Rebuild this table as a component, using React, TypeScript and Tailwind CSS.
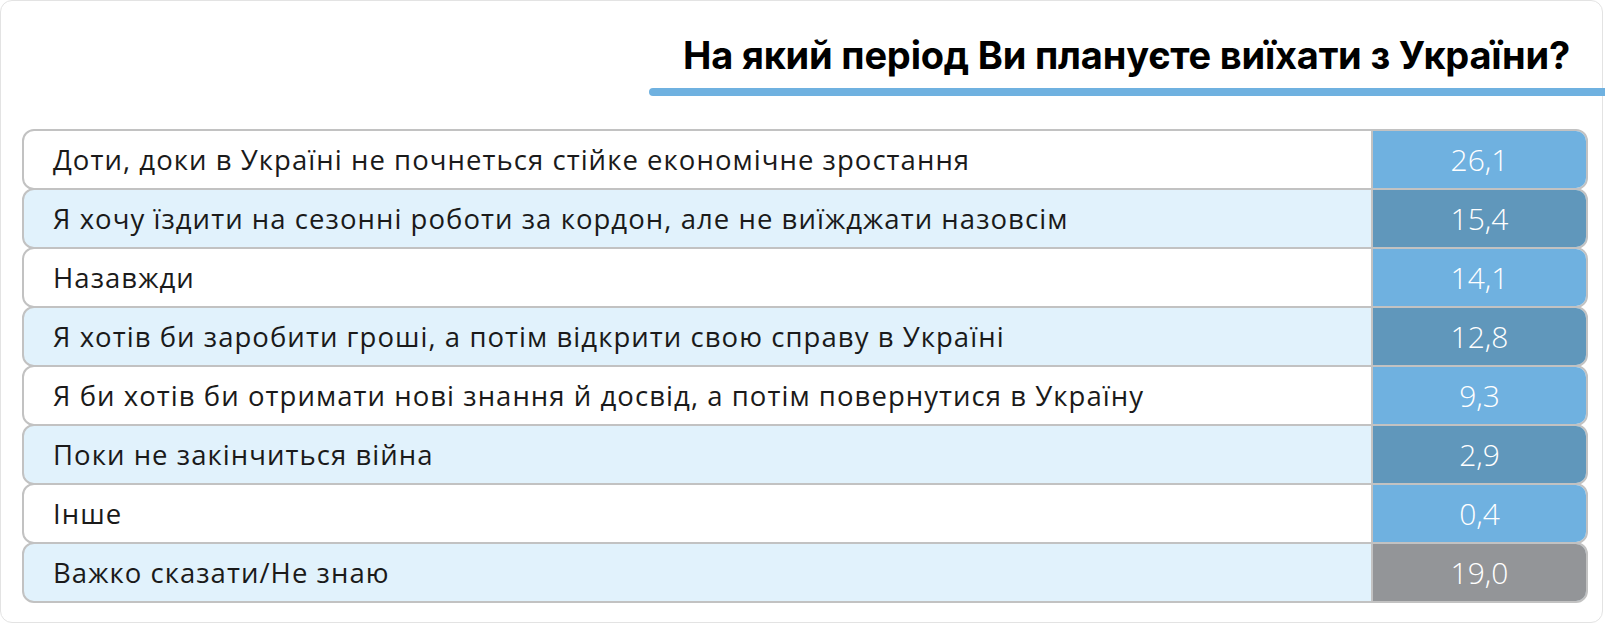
const rows = [
  { label: "Доти, доки в Україні не почнеться стійке економічне зростання", value: "26,1", shade: false, tone: "light" },
  { label: "Я хочу їздити на сезонні роботи за кордон, але не виїжджати назовсім", value: "15,4", shade: true, tone: "dark" },
  { label: "Назавжди", value: "14,1", shade: false, tone: "light" },
  { label: "Я хотів би заробити гроші, а потім відкрити свою справу в Україні", value: "12,8", shade: true, tone: "dark" },
  { label: "Я би хотів би отримати нові знання й досвід, а потім повернутися в Україну", value: "9,3", shade: false, tone: "light" },
  { label: "Поки не закінчиться війна", value: "2,9", shade: true, tone: "dark" },
  { label: "Інше", value: "0,4", shade: false, tone: "light" },
  { label: "Важко сказати/Не знаю", value: "19,0", shade: true, tone: "gray" },
];

const toneClass: Record<string, string> = {
  light: "bg-[#6fb1e0]",
  dark: "bg-[#6097bb]",
  gray: "bg-[#939598]",
};

export default function App() {
  return (
    <div className="w-[1606px] h-[626px] bg-white font-['Open_Sans',sans-serif]">
      <div className="h-[623px] w-[1603px] rounded-xl border border-[#e3e3e3] flex flex-col">
        {/* title */}
        <div className="flex flex-col items-end pt-[30px]">
          <h1 className="pr-[32px] text-[38px] leading-[48px] font-bold text-black tracking-[-0.2px] font-['Inter',sans-serif]">
            На який період Ви плануєте виїхати з України?
          </h1>
          <div className="mt-[9px] -mr-[3px] h-[8px] w-[956px] rounded-l-full bg-[#6fb1e0]" />
        </div>

        <div className="mt-[33px] ml-[21px] w-[1566px] flex flex-col">
          {rows.map((r, i) => (
            <div
              key={i}
              className={`flex h-[61px] rounded-xl border-2 border-[#c2c2c2] overflow-hidden ${i > 0 ? "-mt-[2px]" : ""} ${r.shade ? "bg-[#e1f2fc]" : "bg-white"}`}
            >
              <div className="flex-1 flex items-center pl-[29px] text-[27.5px] tracking-[1.05px] text-[#1a1a1a]">{r.label}</div>
              <div
                className={`w-[215px] border-l-2 border-[#c2c2c2] flex items-center justify-center text-white text-[30px] font-light ${toneClass[r.tone]}`}
              >
                {r.value}
              </div>
            </div>
          ))}
        </div>
      </div>
    </div>
  );
}
